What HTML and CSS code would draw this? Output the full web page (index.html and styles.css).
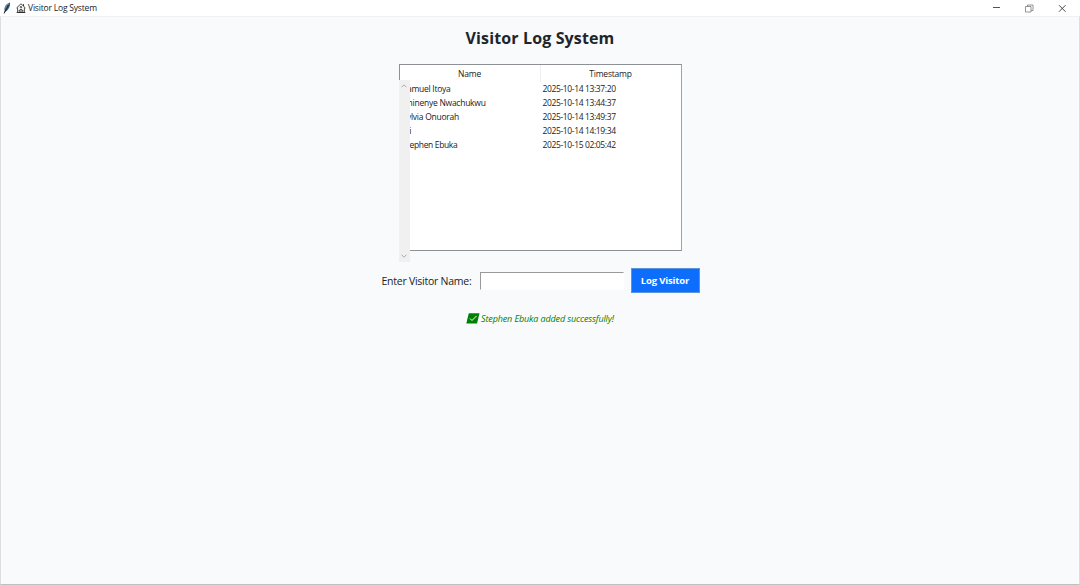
FILE: index.html
```html
<!DOCTYPE html>
<html lang="en">
<head>
<meta charset="utf-8">
<title>Visitor Log System</title>
<link rel="stylesheet" href="styles.css">
</head>
<body>
<header class="titlebar">
  <svg class="feather" width="8" height="12" viewBox="0 0 8 12"><path d="M1 11.5 1.600 8.500C.8 5 3.500 1.500 7 .5 7.500 4 5.500 8 3 9.300Z" fill="#3d5878"/><path d="M1 11.500 5.500 3" stroke="#17202c" stroke-width=".9" fill="none"/><path d="M2.600 6.500C3 4 4.500 2.200 6 1.500" stroke="#8da9c8" stroke-width=".8" fill="none"/></svg>
  <svg class="house" width="10" height="10" viewBox="0 0 10 10" fill="none" stroke="#222" stroke-width=".8"><path d="M.5 5 5 .8 9.500 5M1.600 4.500V9.400H8.400V4.500M.6 9.500H9.400M4 9.300V6.600H6V9.300M2.500 7.800H4M6 7.800H7.500M7.500 3V1"/><circle cx="5" cy="4.200" r=".8"/></svg>
  <span class="caption">Visitor Log System</span>
  <div class="controls">
    <svg width="9" height="9" viewBox="0 0 9 9"><path d="M1 3.500H8" stroke="#555" fill="none"/></svg>
    <svg width="9" height="9" viewBox="0 0 9 9" fill="none" stroke="#888" stroke-width=".9"><path d="M.5 2.500H6V8H.5ZM2.500 2.500V1H8V6.500H6"/></svg>
    <svg width="9" height="9" viewBox="0 0 9 9"><path d="M1 1.200 7.500 7.700M7.500 1.200 1 7.700" stroke="#333" stroke-width=".9" fill="none"/></svg>
  </div>
</header>
<main class="window">
  <h1 class="heading">Visitor Log System</h1>
  <section class="log">
    <div class="row head"><span>Name</span><span>Timestamp</span></div>
    <div class="row"><span class="name">Samuel Itoya</span><span class="time">2025-10-14 13:37:20</span></div>
    <div class="row"><span class="name">Chinenye Nwachukwu</span><span class="time">2025-10-14 13:44:37</span></div>
    <div class="row"><span class="name">Sylvia Onuorah</span><span class="time">2025-10-14 13:49:37</span></div>
    <div class="row"><span class="name last">Ali</span><span class="time">2025-10-14 14:19:34</span></div>
    <div class="row"><span class="name last">Stephen Ebuka</span><span class="time">2025-10-15 02:05:42</span></div>
    <div class="scrollbar">
      <svg width="6" height="4" viewBox="0 0 6 4"><path d="M.5 3.300 3 .8 5.500 3.300" fill="none" stroke="#aaa"/></svg>
      <svg width="6" height="4" viewBox="0 0 6 4"><path d="M.5 .7 3 3.200 5.500 .7" fill="none" stroke="#aaa"/></svg>
    </div>
  </section>
  <form class="entry">
    <label class="label" for="visitor">Enter Visitor Name:</label>
    <input class="field" id="visitor" type="text">
    <button class="submit" type="button">Log Visitor</button>
  </form>
  <p class="status">
    <svg width="14" height="11" viewBox="0 0 14 11"><path d="M2.800 .3H13.500L11 10.500H.3Z" fill="#008000"/><path d="M4 5.500 6 7.500 10.500 3" fill="none" stroke="#fff"/></svg>
    <span>Stephen Ebuka added successfully!</span>
  </p>
</main>
</body>
</html>
```

FILE: styles.css
```css
* { box-sizing: border-box; }
body { margin: 0; height: 585px; display: flex; flex-direction: column; overflow: hidden; font-family: "Open Sans", "Noto Sans", sans-serif; color: #222; }
.titlebar { height: 16px; flex: none; display: flex; align-items: center; background: #fff; padding-left: 3px; }
.house { margin-left: 5px; }
.caption { margin-left: 2px; font-size: 8.5px; letter-spacing: -.19px; line-height: 16px; white-space: nowrap; }
.controls { margin-left: auto; display: flex; gap: 24px; padding-right: 13px; }
.window { flex: 1; background: #f8fafc; border: 1px solid #dcdedf; border-top-color: #eff1f3; border-bottom-color: #bfc1c2; display: flex; flex-direction: column; align-items: center; }
.heading { margin: 9px 0 0; height: 24px; line-height: 24px; font-size: 16px; font-weight: 700; letter-spacing: .13px; color: #212529; white-space: nowrap; }
.log { position: relative; margin-top: 14px; width: 283px; height: 187px; background: #fff; border: 1px solid #8d9095; border-right-color: #a0a3a7; font-size: 8.5px; letter-spacing: -.25px; }
.row { display: grid; grid-template-columns: 140px 141px; height: 14px; line-height: 14px; white-space: nowrap; }
.head { height: 17px; line-height: 17px; text-align: center; letter-spacing: -.2px; }
.head span + span { border-left: 1px solid #eee; }
.name { padding-left: 3px; }
.last { letter-spacing: -.35px; }
.time { padding-left: 3px; letter-spacing: -.37px; }
.scrollbar { position: absolute; left: -1px; top: 15px; width: 11px; height: 182px; padding: 4px 0; background: #f0f0f0; display: flex; flex-direction: column; justify-content: space-between; align-items: center; }
.entry { margin: 17px 0 0 1px; display: flex; align-items: center; height: 25px; }
.label { width: 98px; font-size: 10.5px; letter-spacing: -.25px; white-space: nowrap; }
.field { width: 144px; height: 18px; padding: 0 3px; border: 1px solid #fff; border-top-color: #999; border-left-color: #999; background: #fff; font-size: 10px; }
.submit { margin-left: 7px; width: 69px; height: 25px; padding: 0; border: 1px solid #5a93e0; background: #0d6efd; color: #fff; font: 700 9.5px "Open Sans", sans-serif; letter-spacing: -.15px; }
.status { margin: 17px 0 0; height: 16px; display: flex; align-items: center; gap: 1px; font-size: 9px; font-style: italic; letter-spacing: -.13px; color: #008000; white-space: nowrap; }
```
